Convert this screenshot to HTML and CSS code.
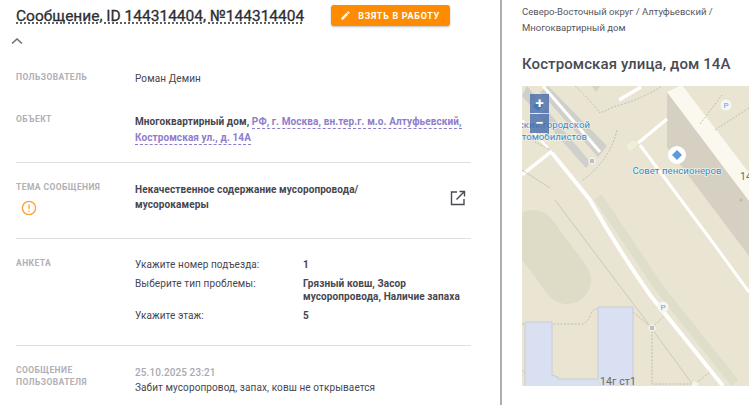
FILE: index.html
```html
<!DOCTYPE html>
<html lang="ru">
<head>
<meta charset="utf-8">
<title>Сообщение</title>
<link rel="stylesheet" href="styles.css">
</head>
<body>
<div class="app">
  <main class="details">
    <header class="head">
      <h1 class="title">Сообщение, ID 144314404, №144314404</h1>
      <button class="take">
        <svg class="take-icon" viewBox="0 0 24 24"><path d="M3 17.25V21h3.75L17.81 9.94l-3.75-3.75L3 17.25zM20.71 7.04a1 1 0 0 0 0-1.41l-2.34-2.34a1 1 0 0 0-1.41 0l-1.83 1.83 3.75 3.75 1.83-1.83z"/></svg>
        <span>ВЗЯТЬ В РАБОТУ</span>
      </button>
    </header>
    <svg class="chevron" viewBox="0 0 12 8"><path d="M1 6.5 6 2l5 4.5"/></svg>

    <section class="row row-plain">
      <div class="label">ПОЛЬЗОВАТЕЛЬ</div>
      <div class="value">Роман Демин</div>
    </section>
    <section class="row row-object">
      <div class="label">ОБЪЕКТ</div>
      <div class="value strong">Многоквартирный дом, <a class="link">РФ, г. Москва, вн.тер.г. м.о. Алтуфьевский, Костромская ул., д. 14А</a></div>
    </section>
    <section class="row row-topic">
      <div class="label">ТЕМА СООБЩЕНИЯ
        <svg class="warn" viewBox="0 0 16 16"><circle cx="8" cy="8" r="6.6"/><path d="M8 4.4v4.6M8 10.6v1.2"/></svg>
      </div>
      <div class="value strong topic">
        <span class="topic-text">Некачественное содержание мусоропровода/ мусорокамеры</span>
        <svg class="open" viewBox="0 0 16 16"><path d="M7 2H1.5v12.5H14V9M9.5 1.5h5v5M14.2 1.8 6.5 9.5"/></svg>
      </div>
    </section>
    <section class="row row-survey">
      <div class="label">АНКЕТА</div>
      <div class="survey">
        <div>Укажите номер подъезда:</div><div class="strong">1</div>
        <div>Выберите тип проблемы:</div><div class="strong">Грязный ковш, Засор мусоропровода, Наличие запаха</div>
        <div>Укажите этаж:</div><div class="strong">5</div>
      </div>
    </section>
    <section class="row row-message">
      <div class="label label-tall">СООБЩЕНИЕ ПОЛЬЗОВАТЕЛЯ</div>
      <div class="value message">
        <div class="date">25.10.2025 23:21</div>
        <div>Забит мусоропровод, запах, ковш не открывается</div>
      </div>
    </section>
  </main>

  <aside class="side">
    <p class="crumbs">Северо-Восточный округ / Алтуфьевский / Многоквартирный дом</p>
    <h2 class="address">Костромская улица, дом 14А</h2>
    <div class="map">
      <svg class="map-art" viewBox="522 86 227 300">
        <rect x="522" y="86" width="227" height="300" fill="#e9e5d2"/>
        <path d="M533 234 L567 280" stroke="#dedbc7" stroke-width="48" stroke-linecap="round" fill="none"/>
        <path d="M592 200 L654 292 L729 386" stroke="#dfdecb" stroke-width="9" fill="none" transform="translate(6 -3)"/>
        <path d="M527 86 L590 162 L586 168 L522 96Z" fill="#cfcfcc"/>
        <path d="M548 86 L607 146 L598 157 L540 92Z" fill="#cfcfcc"/>
        <path d="M543 86 L600 152" stroke="#fff" stroke-width="3" fill="none"/>
        <path d="M592 86 L600 86 L596 92Z" fill="#d8d3c0"/>
        <path d="M667 92 L749 200 V256 L667 147Z" fill="#d5d0c2"/>
        <path d="M667 92 L682 85 L749 173 V201Z" fill="#fbf9ef"/>
        <g fill="none" stroke="#fff" stroke-linecap="butt">
          <path d="M552 153 L590 200 Q616 246 650 295 L723 386" stroke-width="4"/>
          <path d="M552 151 L522 175" stroke-width="3.5"/>
          <path d="M522 120 L548 148" stroke-width="2.5"/>
          <path d="M640 145 L708 236 L749 292" stroke-width="3"/>
          <path d="M638 143 L667 119" stroke-width="3"/>
          <path d="M619 100 L641 87" stroke-width="3.5"/>
        </g>
        <path d="M626 146 L634 140 L638 144 L630 152Z" fill="#eef0d6"/>
        <g fill="none" stroke="#bfbdae" stroke-width=".7">
          <path d="M555 200 L647 322 L693 385"/>
          <path d="M522 170 L550 188"/>
          <path d="M537 386 L522 370"/>
        </g>
        <g fill="none" stroke="#b5b3a2" stroke-width=".8" stroke-dasharray="2 1.5">
          <path d="M575 86 Q590 100 600 113 L616 106 Q640 100 662 86"/>
          <path d="M583 180 Q610 160 617 130"/>
          <path d="M522 135 L550 150"/>
          <path d="M522 324 H582 Q588 322 590 316 Q592 309 598 309"/>
          <path d="M633 312 L652 328 V384 H695 L710 372"/>
          <path d="M652 328 L664 316"/>
          <path d="M700 124 L722 95 M715 130 L749 108"/>
        </g>
        <path d="M525 322 H552 V375 L558 377 V379 H598 V307 H633 V387 H525Z" fill="#d9e0f2" stroke="#c6ccd6"/>
        <circle cx="538" cy="106" r="8" fill="#fff" opacity=".6"/>
        <path d="M538 101 L543 106 L538 111 L533 106Z" fill="#5b9ce0"/>
        <circle cx="726" cy="105" r="5.5" fill="#f6f7f2"/>
        <text x="726" y="108" class="p">P</text>
        <circle cx="663" cy="307" r="5.5" fill="#f6f7f2"/>
        <text x="663" y="310" class="p">P</text>
        <circle cx="592" cy="161" r="3.5" fill="#f4f4ee"/>
        <path d="M591 159v4M593 159v4" stroke="#8a8a80"/>
        <circle cx="652" cy="328" r="3.5" fill="#f4f4ee"/>
        <path d="M651 326v4M653 326v4" stroke="#8a8a80"/>
        <circle cx="695" cy="385" r="3.5" fill="#f4f4ee"/>
        <circle cx="741" cy="200" r="1.5" fill="#bdb8aa"/>
        <circle cx="677" cy="155" r="9" fill="#fff"/>
        <path d="M677 150 L682 155 L677 160 L672 155Z" fill="#5b9ce0"/>
        <text x="677" y="174" class="poi">Совет пенсионеров</text>
        <text x="590" y="128" class="poi poi-end">ский городской</text>
        <text x="587" y="140" class="poi poi-end">автомобилистов</text>
        <text x="740" y="180" class="house">14</text>
        <text x="600" y="385" class="house">14г ст1</text>
      </svg>
      <div class="zoom">
        <button class="zoom-btn">+</button>
        <button class="zoom-btn">−</button>
      </div>
    </div>
  </aside>
</div>
</body>
</html>
```
FILE: styles.css
```css
* { box-sizing: border-box; }
html, body { margin: 0; height: 100%; overflow: hidden; background: #fff; }
body { font-family: Roboto, "Noto Sans", sans-serif; font-size: 10px; line-height: 16px; color: #46464f; letter-spacing: .1px; }
.app { display: flex; height: 405px; }
.details { width: 502px; flex: none; padding: 5px 29px 0 16px; border-right: 2px solid #adadb3; overflow: hidden; }
.head { display: flex; align-items: center; gap: 27px; height: 21px; }
.title { margin: 0; font-size: 15.5px; font-weight: 400; line-height: 22px; letter-spacing: 0; color: #2d2d33; text-decoration: underline dotted #333; text-underline-offset: 2px; white-space: nowrap; -webkit-text-stroke: .3px #2d2d33; }
.take { display: flex; align-items: center; gap: 7px; width: 119px; height: 21px; padding: 0 0 0 9px; border: 0; border-radius: 3px; background: #ff8c00; color: #fff; font: 700 9px Roboto, sans-serif; letter-spacing: .7px; white-space: nowrap; box-shadow: 0 1px 2px rgba(0,0,0,.25); }
.take-icon { width: 11px; height: 11px; fill: #fff; }
.chevron { display: block; width: 12px; height: 8px; margin: 11px 0 0 -5px; fill: none; stroke: #666d75; stroke-width: 1.5; }
.row { display: grid; grid-template-columns: 119px 1fr; }
.label { font-size: 8.5px; font-weight: 700; line-height: 12px; letter-spacing: .42px; color: #b0b0b6; margin-top: -1px; }
.label-tall { width: 90px; }
.strong { font-weight: 700; }
.link { color: #8f7ccc; border-bottom: 1px dashed #8f7ccc; padding-bottom: 1px; }
.row-plain { height: 69px; padding-top: 26px; }
.row-plain .label { margin-top: 0; }
.row-object { height: 48px; }
.row-topic, .row-survey, .row-message { border-top: 1px solid #dfdfe2; }
.row-topic { height: 76px; padding-top: 19px; }
.warn { display: block; width: 16px; height: 16px; margin: 7px 0 0 5px; fill: none; stroke: #ff9d2e; stroke-width: 1.3; }
.topic { display: flex; justify-content: space-between; align-items: flex-start; line-height: 15px; }
.topic-text { width: 240px; }
.open { width: 16px; height: 16px; margin: 8px 5px 0 0; fill: none; stroke: #4a4a52; stroke-width: 1.4; }
.row-survey { height: 107px; padding-top: 18px; }
.row-survey .label { margin-top: 0; }
.survey { display: grid; grid-template-columns: 168px 1fr; align-content: start; row-gap: 6px; line-height: 13px; padding-top: 1px; padding-right: 6px; }
.row-message { padding-top: 19px; }
.message { line-height: 15px; }
.date { color: #a9a9b0; font-weight: 500; }
.side { flex: 1; min-width: 0; padding: 4px 0 0 20px; overflow: hidden; }
.crumbs { margin: 0; width: 200px; color: #55555e; font-size: 9.5px; letter-spacing: 0; }
.address { margin: 18px 0 0; font-size: 15px; font-weight: 500; line-height: 20px; color: #4a4a55; letter-spacing: .1px; white-space: nowrap; }
.map { position: relative; width: 227px; height: 300px; margin-top: 12px; overflow: hidden; }
.map-art { display: block; width: 227px; height: 300px; }
.p { font: 8px Roboto, sans-serif; fill: #5aa2e8; text-anchor: middle; }
.poi { font: 9.5px Roboto, sans-serif; letter-spacing: .1px; fill: #2e8bd0; text-anchor: middle; paint-order: stroke; stroke: #f4f2e6; stroke-width: 1.5px; }
.poi-end { text-anchor: end; }
.house { font: 10.5px Roboto, sans-serif; fill: #6a6a66; }
.zoom { position: absolute; left: 8px; top: 8px; display: flex; flex-direction: column; gap: 1px; }
.zoom-btn { width: 19px; height: 19px; padding: 0; border: 0; background: rgba(73,108,170,.82); color: #fff; font: 700 15px/19px Roboto, sans-serif; }
```
